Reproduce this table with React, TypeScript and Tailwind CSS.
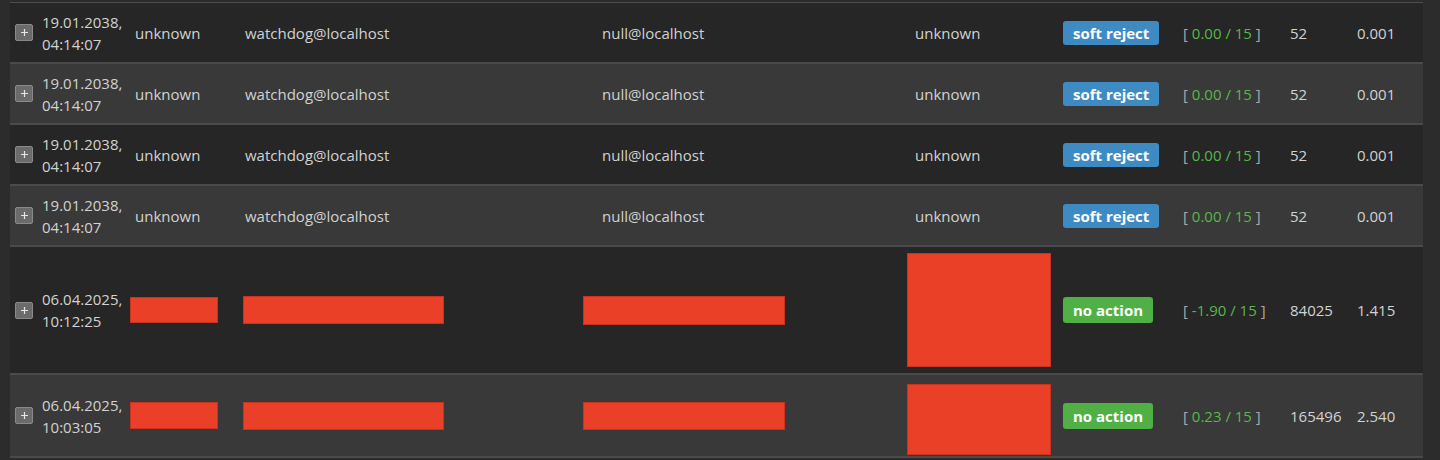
import React from "react";

type Row = {
  date: string;
  time: string;
  from?: string;
  rcpt?: string;
  ip?: string;
  action: "soft reject" | "no action";
  score: string;
  size: string;
  scan: string;
  redacted?: boolean;
  tall?: boolean;
};

const rows: Row[] = [
  { date: "19.01.2038,", time: "04:14:07", from: "watchdog@localhost", rcpt: "null@localhost", ip: "unknown", action: "soft reject", score: "0.00", size: "52", scan: "0.001" },
  { date: "19.01.2038,", time: "04:14:07", from: "watchdog@localhost", rcpt: "null@localhost", ip: "unknown", action: "soft reject", score: "0.00", size: "52", scan: "0.001" },
  { date: "19.01.2038,", time: "04:14:07", from: "watchdog@localhost", rcpt: "null@localhost", ip: "unknown", action: "soft reject", score: "0.00", size: "52", scan: "0.001" },
  { date: "19.01.2038,", time: "04:14:07", from: "watchdog@localhost", rcpt: "null@localhost", ip: "unknown", action: "soft reject", score: "0.00", size: "52", scan: "0.001" },
  { date: "06.04.2025,", time: "10:12:25", action: "no action", score: "-1.90", size: "84025", scan: "1.415", redacted: true, tall: true },
  { date: "06.04.2025,", time: "10:03:05", action: "no action", score: "0.23", size: "165496", scan: "2.540", redacted: true },
];

function Plus() {
  return (
    <div className="flex h-[17px] w-[18px] items-center justify-center rounded-[2px] border border-[#8a8a8a] bg-[#6b6b6b]">
      <svg width="9" height="9" viewBox="0 0 9 9">
        <path d="M4.5 1v7M1 4.5h7" stroke="#e6e6e6" strokeWidth="1.2" />
      </svg>
    </div>
  );
}

function Badge({ action }: { action: Row["action"] }) {
  const soft = action === "soft reject";
  return (
    <span
      className={
        soft
          ? "rounded-[3px] bg-[#3e8bc3] px-[10px] py-[2px] text-[15px] font-bold leading-[19px] text-white"
          : "rounded-[3px] bg-[#50af45] px-[10px] py-[3px] text-[15px] font-bold leading-[19px] text-white"
      }
    >
      {action}
    </span>
  );
}

function Red({ className }: { className: string }) {
  return <div className={"border border-[#c9321f] bg-[#e94027] " + className} />;
}

export default function App() {
  return (
    <div
      className="min-h-[460px] bg-[#2c2c2c] pl-[10px] pt-[2px] text-[15px] text-[#d2d2d2]"
      style={{ fontFamily: '"Open Sans", "Noto Sans", sans-serif' }}
    >
      <div className="w-[1413px] border-t border-[#4e4e4e]">
        {rows.map((r, i) => (
          <div
            key={i}
            className={
              "grid grid-cols-[27px_93px_110px_343px_324px_151px_120px_107px_67px_71px] items-center border-b-2 border-[#4a4a4a] leading-[22px] " +
              (i % 2 === 0 ? "bg-[#262626] " : "bg-[#393939] ") +
              (r.tall ? "h-[128px]" : r.redacted ? "h-[83px]" : "h-[61px]")
            }
          >
            <div className="pl-[5px]">
              <Plus />
            </div>
            <div className="pl-[5px]">
              <div>{r.date}</div>
              <div>{r.time}</div>
            </div>
            <div className={r.redacted ? "" : "pl-[5px]"}>
              {r.redacted ? <Red className={r.tall ? "h-[26px] w-[88px]" : "h-[27px] w-[88px]"} /> : "unknown"}
            </div>
            <div className={r.redacted ? "pl-[3px]" : "pl-[5px]"}>
              {r.redacted ? <Red className="h-[28px] w-[201px]" /> : r.from}
            </div>
            <div className={r.redacted ? "" : "pl-[19px]"}>
              {r.redacted ? <Red className={r.tall ? "h-[29px] w-[202px]" : "h-[28px] w-[202px]"} /> : r.rcpt}
            </div>
            <div className={r.redacted ? "self-start" : "pl-[8px]"}>
              {r.redacted ? (
                <Red className={r.tall ? "mt-[6px] h-[114px] w-[144px]" : "mt-[9px] h-[71px] w-[144px]"} />
              ) : (
                r.ip
              )}
            </div>
            <div className="pl-[5px]">
              <Badge action={r.action} />
            </div>
            <div className="pl-[5px] text-[#a8a8a8]">
              [ <span className="text-[#57b848]">{r.score} / 15</span> ]
            </div>
            <div className="pl-[5px]">{r.size}</div>
            <div className="pl-[5px]">{r.scan}</div>
          </div>
        ))}
      </div>
    </div>
  );
}
